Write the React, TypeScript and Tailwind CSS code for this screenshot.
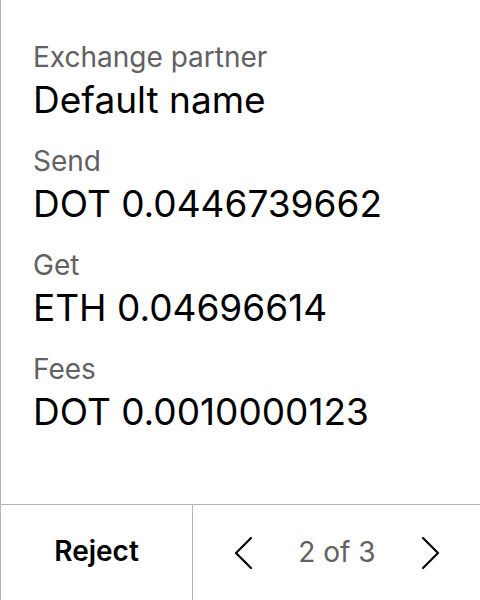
const rows = [
  { label: "Exchange partner", value: "Default name" },
  { label: "Send", value: "DOT 0.0446739662" },
  { label: "Get", value: "ETH 0.04696614" },
  { label: "Fees", value: "DOT 0.0010000123" },
];

function Chevron({ dir }: { dir: "left" | "right" }) {
  return (
    <svg width="20" height="34" viewBox="0 0 20 34" fill="none" stroke="black" strokeWidth="2.2" strokeLinecap="round" strokeLinejoin="round">
      {dir === "left" ? <polyline points="17,2 2,17 17,32" /> : <polyline points="3,2 18,17 3,32" />}
    </svg>
  );
}

export default function App() {
  return (
    <div
      className="flex flex-col w-[480px] h-[600px] bg-white border-l border-[#b3b3b3]"
      style={{ fontFamily: "Inter, sans-serif" }}
    >
      <div className="flex-1 flex flex-col pl-8 pt-[39px] gap-[18px]">
        {rows.map((r) => (
          <div key={r.label} className="flex flex-col">
            <span className="text-[28px] leading-[36px] text-[#616161]">{r.label}</span>
            <span className="text-[37px] leading-[50px] text-black">{r.value}</span>
          </div>
        ))}
      </div>
      <div className="h-[96px] flex border-t border-[#b3b3b3]">
        <button className="w-[191px] flex items-center justify-center pb-[3px] text-[28px] font-semibold text-black">
          Reject
        </button>
        <div className="flex-1 flex items-center justify-between border-l border-[#b3b3b3] pl-[41px] pr-[40px]">
          <Chevron dir="left" />
          <span className="pb-[2px] text-[28px] text-[#616161]">2 of 3</span>
          <Chevron dir="right" />
        </div>
      </div>
    </div>
  );
}
